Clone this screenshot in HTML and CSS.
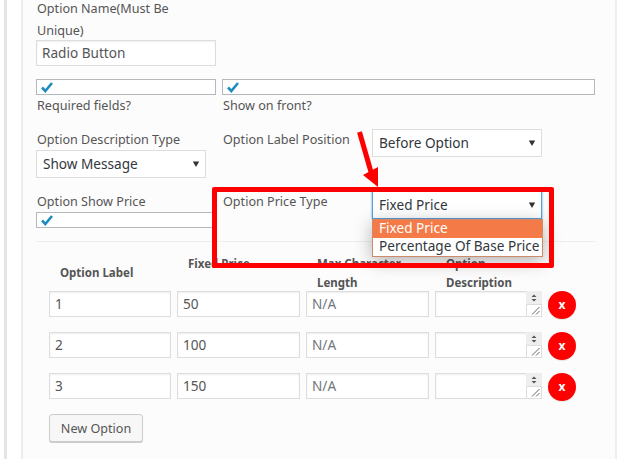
FILE: index.html
```html
<!DOCTYPE html>
<html lang="en">
<head>
<meta charset="utf-8">
<title>Option</title>
<link rel="stylesheet" href="styles.css">
</head>
<body>
<div class="outer">
  <main class="panel">
    <section class="name-field">
      <label class="label name-label"><span>Option Name(Must Be</span> <span>Unique)</span></label>
      <input class="text" type="text" value="Radio Button">
    </section>

    <section class="row checks">
      <div class="col-narrow">
        <div class="check"><svg width="16" height="14" viewBox="0 0 16 14"><path d="M3 7.5 6.3 11 13 3" fill="none" stroke="#1e8cbe" stroke-width="2.6"/></svg></div>
        <div class="label">Required fields?</div>
      </div>
      <div class="col-wide">
        <div class="check"><svg width="16" height="14" viewBox="0 0 16 14"><path d="M3 7.5 6.3 11 13 3" fill="none" stroke="#1e8cbe" stroke-width="2.6"/></svg></div>
        <div class="label">Show on front?</div>
      </div>
    </section>

    <section class="row selects">
      <div class="col-narrow">
        <div class="label">Option Description Type</div>
        <select class="select"><option>Show Message</option></select>
      </div>
      <div class="label-pos">
        <div class="label">Option Label Position</div>
        <select class="select"><option>Before Option</option></select>
      </div>
    </section>

    <section class="row prices">
      <div class="col-narrow">
        <div class="label">Option Show Price</div>
        <div class="check"><svg width="16" height="14" viewBox="0 0 16 14"><path d="M3 7.5 6.3 11 13 3" fill="none" stroke="#1e8cbe" stroke-width="2.6"/></svg></div>
      </div>
      <div class="label-pos">
        <div class="label">Option Price Type</div>
        <div class="select-wrap">
          <select class="select focused"><option>Fixed Price</option></select>
          <ul class="dropdown">
            <li class="active">Fixed Price</li>
            <li>Percentage Of Base Price</li>
          </ul>
        </div>
      </div>
    </section>

    <hr class="divider">

    <section class="grid">
      <div class="head head-label">Option Label</div>
      <div class="head">Fixed Price</div>
      <div class="head">Max Character Length</div>
      <div class="head">Option Description</div>
      <div></div>

      <input class="text" type="text" value="1">
      <input class="text" type="text" value="50">
      <input class="text" type="text" placeholder="N/A">
      <div class="area-wrap"><textarea class="area"></textarea><svg class="area-ctl" width="16" height="26" viewBox="0 0 16 26"><path d="M0 0H16V13H0Z" fill="#eee"/><path d="M.5 13.5H15.5V25.5H.5Z" fill="#fff" stroke="#ddd"/><path d="M5.5 6 8 3.5 10.5 6ZM5.5 8 8 10.5 10.5 8Z" fill="#555"/><path d="M6 23.5 13.5 16M10 23.5 13.5 20" stroke="#666" stroke-width="1" fill="none"/></svg></div>
      <button class="remove" type="button">x</button>

      <input class="text" type="text" value="2">
      <input class="text" type="text" value="100">
      <input class="text" type="text" placeholder="N/A">
      <div class="area-wrap"><textarea class="area"></textarea><svg class="area-ctl" width="16" height="26" viewBox="0 0 16 26"><path d="M0 0H16V13H0Z" fill="#eee"/><path d="M.5 13.5H15.5V25.5H.5Z" fill="#fff" stroke="#ddd"/><path d="M5.5 6 8 3.5 10.5 6ZM5.5 8 8 10.5 10.5 8Z" fill="#555"/><path d="M6 23.5 13.5 16M10 23.5 13.5 20" stroke="#666" stroke-width="1" fill="none"/></svg></div>
      <button class="remove" type="button">x</button>

      <input class="text" type="text" value="3">
      <input class="text" type="text" value="150">
      <input class="text" type="text" placeholder="N/A">
      <div class="area-wrap"><textarea class="area"></textarea><svg class="area-ctl" width="16" height="26" viewBox="0 0 16 26"><path d="M0 0H16V13H0Z" fill="#eee"/><path d="M.5 13.5H15.5V25.5H.5Z" fill="#fff" stroke="#ddd"/><path d="M5.5 6 8 3.5 10.5 6ZM5.5 8 8 10.5 10.5 8Z" fill="#555"/><path d="M6 23.5 13.5 16M10 23.5 13.5 20" stroke="#666" stroke-width="1" fill="none"/></svg></div>
      <button class="remove" type="button">x</button>
    </section>

    <button class="new-option" type="button">New Option</button>
  </main>
</div>

<div class="annot-box"></div>
<svg class="annot-arrow" width="40" height="70" viewBox="0 0 40 70"><path d="M3.5 2 L15 42" stroke="#f00" stroke-width="5" fill="none"/><path d="M7 45 L22 37 L22 57 Z" fill="#f00"/></svg>
</body>
</html>
```
FILE: styles.css
```css
* { box-sizing: border-box; }
html, body { margin: 0; padding: 0; height: 459px; overflow: hidden; }
body {
  background: #fff;
  font-family: "Noto Sans", "Open Sans", sans-serif;
  font-size: 12.6px;
  line-height: 21px;
  color: #555;
  position: relative;
}
.outer {
  margin: 0 0 0 4px;
  width: 613px;
  height: 459px;
  padding: 0 0 0 14px;
  background: #fff;
  border-left: 3px solid #e5e5e5;
}
.panel {
  width: 596px;
  height: 459px;
  padding: 0 20px 0 13px;
  background: #fcfcfc;
  border-left: 2px solid #eee;
  border-right: 2px solid #eee;
}
.label { color: #555; padding-left: 1px; }
.name-field { width: 180px; padding-top: 1px; }
.name-label { display: block; }
.name-label span { display: block; line-height: 16px; }
.name-label span + span { margin-top: 6px; }
.name-field .text { margin-top: 1px; }
.text {
  display: block;
  width: 100%;
  height: 26px;
  padding: 0 5px 2px;
  font: inherit;
  font-size: 13.6px;
  color: #555;
  background: #fff;
  border: 1px solid #ddd;
  box-shadow: inset 0 1px 2px rgba(0,0,0,.07);
  outline: 0;
  border-radius: 0;
}
.text::placeholder { color: #72777c; opacity: 1; }
.row { display: flex; gap: 6px; }
.checks { margin-top: 13px; }
.col-narrow { width: 180px; flex: none; }
.col-wide { width: 373px; flex: none; }
.check {
  height: 16px;
  background: #fff;
  border: 1px solid #b4b9be;
  line-height: 0;
  padding-left: 2px;
}
.selects { margin-top: 13px; height: 62px; }
.label-pos { display: flex; flex: none; width: 320px; }
.label-pos .label { width: 150px; flex: none; }
.select {
  display: block;
  width: 170px;
  height: 28px;
  padding: 0 6px 2px;
  font: inherit;
  font-size: 13.6px;
  color: #32373c;
  appearance: none;
  background: #fff url("data:image/svg+xml,%3Csvg xmlns='http://www.w3.org/2000/svg' width='8' height='8'%3E%3Cpath d='M.8 1.5H7.2L4 7Z' fill='%23333'/%3E%3C/svg%3E") no-repeat right 5px center;
  border: 1px solid #ddd;
  border-radius: 0;
  outline: 0;
}
.prices { height: 50px; }
.select-wrap { position: relative; z-index: 2; }
.select.focused { border-color: #5b9dd9; box-shadow: 0 0 2px rgba(30,140,190,.8); }
.dropdown {
  position: absolute;
  left: 0;
  top: 28px;
  width: 171px;
  margin: 0;
  padding: 0;
  list-style: none;
  background: #fff;
  border: 1px solid #d08a6a;
  font-size: 13.6px;
  line-height: 16px;
  color: #32373c;
  box-shadow: 0 4px 18px rgba(0,0,0,.3);
  white-space: nowrap;
}
.dropdown li { padding: 0 6px; height: 18px; }
.dropdown .active { background: #f47b47; color: #fff; }
.divider { margin: 0; border: 0; border-top: 1px solid #eee; width: 559px; }
.grid {
  display: grid;
  grid-template-columns: 122px 123px 123px 107px 28px;
  column-gap: 6px;
  row-gap: 13px;
  margin: 0 0 0 13px;
  align-items: start;
}
.head { font-weight: 700; font-size: 11.5px; line-height: 19px; color: #555; height: 36px; padding: 12px 0 0 11px; }
.head-label { padding-top: 21px; }
.area-wrap { position: relative; height: 26px; }
.area {
  display: block;
  width: 107px;
  height: 26px;
  margin: 0;
  background: #fff;
  border: 1px solid #ddd;
  box-shadow: inset 0 1px 2px rgba(0,0,0,.07);
  overflow: hidden;
  resize: none;
  outline: 0;
  border-radius: 0;
}
.area-ctl { position: absolute; right: 0; top: 0; }
.remove {
  width: 28px;
  height: 28px;
  border: 0;
  border-radius: 50%;
  padding: 0;
  background: #f00;
  color: #fff;
  font: 700 12px/28px "Noto Sans", sans-serif;
  box-shadow: 0 1px 1px rgba(0,0,0,.1);
}
.new-option {
  display: block;
  margin: 13px 0 0 13px;
  width: 94px;
  height: 28px;
  padding: 0;
  font: inherit;
  color: #555;
  background: #f7f7f7;
  border: 1px solid #ccc;
  border-radius: 3px;
  box-shadow: 0 1px 0 #ccc;
}
.annot-box {
  position: absolute;
  left: 212px;
  top: 187px;
  width: 342px;
  height: 81px;
  border: 5px solid #f00;
  border-radius: 2px;
  pointer-events: none;
  z-index: 3;
}
.annot-arrow { position: absolute; left: 356px; top: 130px; z-index: 3; }
```
